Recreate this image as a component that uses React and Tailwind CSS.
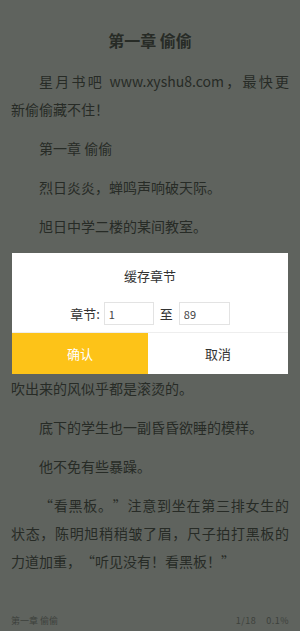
// Reader page with "cache chapters" dialog
const paragraphs = [
    ['星月书吧 www.xyshu8.com，最快更', '新偷偷藏不住！'],
    ['第一章 偷偷'],
    ['烈日炎炎，蝉鸣声响破天际。'],
    ['旭日中学二楼的某间教室。'],
    [{ hidden: '讲台上，数学老师正在讲题。' }],
    [
        { hidden: '窗外的太阳毒辣辣的，头顶上的电风扇' },
        { hidden: '吱呀吱呀地转着，却一点也不起作用，' },
        { hidden: '教室里闷热得像个蒸笼，连窗户缝里' },
        '吹出来的风似乎都是滚烫的。',
    ],
    ['底下的学生也一副昏昏欲睡的模样。'],
    ['他不免有些暴躁。'],
    ['“看黑板。”注意到坐在第三排女生的', '状态，陈明旭稍稍皱了眉，尺子拍打黑板的', '力道加重，“听见没有！看黑板！”'],
];

// curly quotes come out half-width, so give them a full em box
const withQuotes = (text) =>
    text.split(/([“”])/).map((part, k) => {
        if (part === '“') return <span key={k} className="inline-block w-[1em] text-right">{part}</span>;
        if (part === '”') return <span key={k} className="inline-block w-[1em] text-left">{part}</span>;
        return part;
    });

const CacheDialog = () => (
    <div className="absolute left-[12px] top-[253px] w-[276px] h-[121px] bg-white flex flex-col">
        <div className="flex-1 flex flex-col items-center">
            <div className="mt-[13px] text-[13px] leading-[20px] text-[#333333]">缓存章节</div>
            <div className="mt-[16px] flex items-center text-[13px] text-[#333333]">
                <span className="mr-[4px]">章节:</span>
                <input
                    readOnly
                    defaultValue="1"
                    className="w-[50px] h-[23px] border border-[#e3e3e3] px-[4px] text-[11px] text-[#444444] outline-none"
                />
                <span className="mx-[6px]">至</span>
                <input
                    readOnly
                    defaultValue="89"
                    className="w-[51px] h-[23px] border border-[#e3e3e3] px-[4px] text-[11px] text-[#444444] outline-none"
                />
            </div>
        </div>
        <div className="flex h-[42px] border-t border-[#eeeeee]">
            <button className="w-[136px] bg-[#fdc318] text-white text-[13px]">确认</button>
            <button className="flex-1 bg-white text-[#333333] text-[13px]">取消</button>
        </div>
    </div>
);

export default function App() {
    return (
        <div
            lang="zh-CN"
            className="relative w-[300px] h-[631px] bg-[#5f635e] flex flex-col overflow-hidden"
            style={{ fontFamily: '"Noto Sans CJK SC", "Noto Sans", sans-serif' }}
        >
            <div className="flex-1 px-[11px] pt-[26px] text-[#272b26]">
                <h1 className="text-[16px] leading-[28px] font-bold text-center mb-[13px]">第一章 偷偷</h1>
                {paragraphs.map((lines, i) => (
                    <div key={i} className={`text-[14px] leading-[28px] ${i > 0 ? 'mt-[11px]' : ''}`}>
                        {lines.map((line, j) => {
                            const last = j === lines.length - 1;
                            const text = typeof line === 'string' ? line : line.hidden;
                            return (
                                <div
                                    key={j}
                                    className={`whitespace-nowrap ${j === 0 ? 'pl-[2em]' : ''} ${
                                        last ? '' : 'text-justify [text-align-last:justify]'
                                    } ${typeof line === 'string' ? '' : 'invisible'}`}
                                >
                                    {withQuotes(text)}
                                </div>
                            );
                        })}
                    </div>
                ))}
            </div>
            <div className="flex justify-between items-center px-[11px] pb-[4px] text-[9px] leading-[12px] text-[#3d413c]">
                <span>第一章 偷偷</span>
                <span className="tracking-[0.5px]">1/18&nbsp;&nbsp;&nbsp;&nbsp;0.1%</span>
            </div>
            <CacheDialog />
        </div>
    );
}
